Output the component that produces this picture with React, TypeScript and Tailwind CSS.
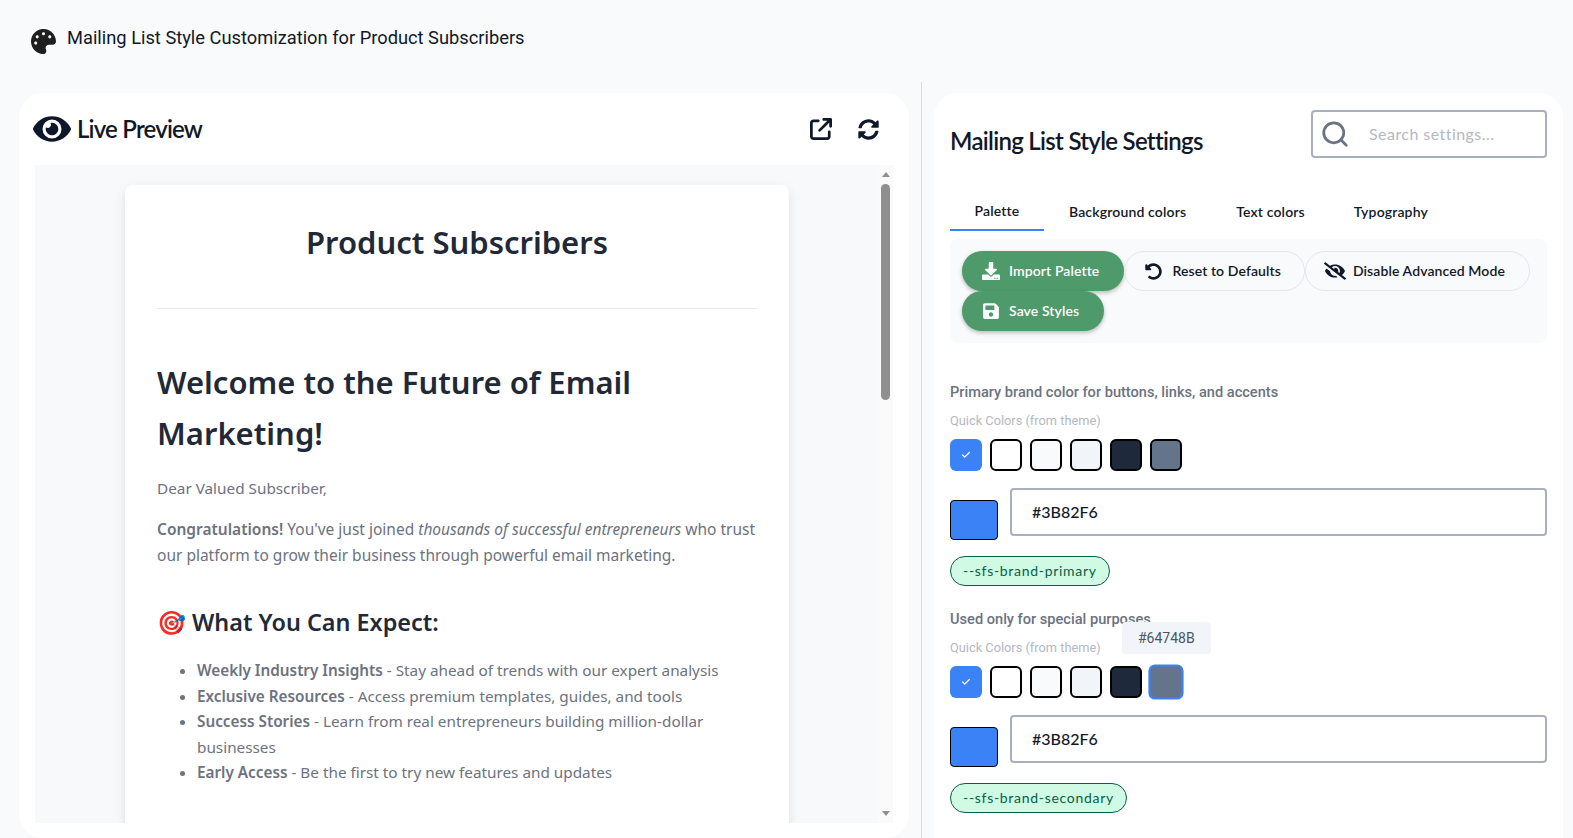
import { Search, Check } from "lucide-react";
import { FaPalette, FaEye, FaSyncAlt, FaSave, FaUndoAlt, FaEyeSlash, FaDownload } from "react-icons/fa";
import { FaArrowUpRightFromSquare } from "react-icons/fa6";

const swatches = ["bg-[#ffffff]", "bg-[#f8fafc]", "bg-[#f1f5f9]", "bg-[#1e293b]", "bg-[#64748b]"];

function Swatches({ hoverLast }: { hoverLast?: boolean }) {
  return (
    <div className="flex gap-2 h-8">
      <div className="w-8 h-8 rounded-md bg-[#3b82f6] flex items-center justify-center">
        <Check size={10} strokeWidth={3} color="#fff" />
      </div>
      {swatches.map((c, i) =>
        hoverLast && i === 4 ? (
          <div key={c} className={"w-8 h-8 rounded-md border-2 border-[#3b82f6] scale-110 " + c} />
        ) : (
          <div key={c} className={"w-8 h-8 rounded-md border-2 border-black " + c} />
        )
      )}
    </div>
  );
}

function ColorSetting({ label, token, hoverLast }: { label: string; token: string; hoverLast?: boolean }) {
  return (
    <div className="relative mb-[23px]">
      <div className="font-['Roboto',sans-serif] text-[14.6px] font-medium text-[#6b7280] leading-5 mb-[10px]">{label}</div>
      <div className="font-['Roboto',sans-serif] text-[12.8px] text-[#b4b8bf] leading-[18px] mb-[9px]">Quick Colors (from theme)</div>
      <Swatches hoverLast={hoverLast} />
      <div className="flex items-start gap-3 mt-[17px]">
        <div className="w-12 h-10 mt-3 rounded bg-[#3b82f6] border border-black" />
        <div className="flex-1 h-12 rounded border-2 border-[#a9b0bd] bg-white flex items-center pl-5 font-['Lato',sans-serif] text-base font-medium text-[#111827]">
          #3B82F6
        </div>
      </div>
      <div className="mt-[16px]">
        <span className="inline-flex items-center h-[30px] px-3 rounded-full bg-[#d1fae5] border border-[#065f46] text-sm text-[#065f46] font-['Lato',sans-serif] tracking-[0.7px]">
          {token}
        </span>
      </div>
      {hoverLast && (
        <div className="absolute left-[172px] top-[13px] px-4 h-8 flex items-center rounded bg-[#f1f5f9] font-['Roboto',sans-serif] text-sm text-[#4b5563]">
          #64748B
        </div>
      )}
    </div>
  );
}

function GreenButton({ icon, children }: { icon: React.ReactNode; children: React.ReactNode }) {
  return (
    <button className="h-10 pl-5 pr-[25px] rounded-full bg-[#4f9a6a] text-white flex items-center gap-[9px] text-sm font-semibold tracking-[0.1px] shadow-[0_2px_4px_rgba(0,0,0,0.25)]">
      {icon}
      {children}
    </button>
  );
}

function OutlineButton({ icon, children, className }: { icon: React.ReactNode; children: React.ReactNode; className?: string }) {
  return (
    <button className={"h-10 rounded-full border border-[#e2e8f0] text-[#111827] flex items-center text-sm font-semibold tracking-[0.1px] " + className}>
      {icon}
      {children}
    </button>
  );
}

function FakeScrollbar() {
  return (
    <div className="w-[15px] shrink-0 bg-[#fafafa] flex flex-col items-center pt-[7px]">
      <div className="w-0 h-0 border-x-[4.5px] border-x-transparent border-b-[5px] border-b-[#8f8f8f]" />
      <div className="w-[9px] h-[216px] rounded-full bg-[#8f8f8f] mt-[7px]" />
      <div className="mt-auto mb-[7px] w-0 h-0 border-x-[4.5px] border-x-transparent border-t-[5px] border-t-[#8f8f8f]" />
    </div>
  );
}

export default function App() {
  return (
    <div className="h-screen overflow-hidden bg-[#f8fafc] flex flex-col">
      <header className="h-[82px] shrink-0 flex items-center pl-[31px] pb-[8px] gap-[11px]">
        <FaPalette size={25} className="text-[#1f1f1f] mt-2" />
        <h1 className="font-['Roboto',sans-serif] text-[18.3px] text-[#111827] mt-[3px] -translate-y-[1px]">
          Mailing List Style Customization for Product Subscribers
        </h1>
      </header>

      <div className="flex-1 min-h-0 flex">
        <div className="w-[922px] shrink-0 border-r border-[#d9dce1] pl-[19px] pr-[12px] pt-[11px]">
          <section className="h-full bg-white rounded-3xl flex flex-col pt-[17px] px-4 pb-[15px]">
            <div className="flex items-center h-[38px] mb-[17px]">
              <FaEye size={38} className="text-[#0f172a] ml-[-2px]" />
              <h2 className="font-['Lato',sans-serif] text-2xl font-semibold tracking-[-0.8px] text-[#111827] ml-[6px]">Live Preview</h2>
              <div className="ml-auto flex items-center gap-[26px] pr-[14px]">
                <FaArrowUpRightFromSquare size={22} className="text-[#0f172a]" />
                <FaSyncAlt size={21} className="text-[#0f172a]" />
              </div>
            </div>

            <div className="flex-1 min-h-0 flex">
              <div className="flex-1 min-w-0 bg-[#f8f9fb] overflow-hidden pt-5 pl-[90px] pr-[89px]">
                <article className="bg-white rounded-lg shadow-[0_4px_12px_rgba(0,0,0,0.1)] px-8 pt-[32px] h-[1760px] font-['Noto_Sans',sans-serif] text-[#6b7280]">
                  <h1 className="text-[31px] font-semibold text-[#1f2937] text-center leading-[50px] pb-[41px] border-b border-[#e5e7eb]">
                    Product Subscribers
                  </h1>
                  <h2 className="text-[31px] font-semibold text-[#1f2937] leading-[51px] mt-[48px] mb-[16px]">
                    Welcome to the Future of Email Marketing!
                  </h2>
                  <p className="text-[15.3px] leading-[26px] mb-[15px]">Dear Valued Subscriber,</p>
                  <p className="text-[15.5px] leading-[26px]">
                    <strong className="font-semibold">Congratulations!</strong> You've just joined{" "}
                    <em>thousands of successful entrepreneurs</em> who trust our platform to grow their business through
                    powerful email marketing.
                  </p>
                  <h3 className="text-[23.4px] font-semibold text-[#1f2937] leading-[36px] mt-[36px] mb-[18px]">
                    🎯 What You Can Expect:
                  </h3>
                  <ul className="list-disc pl-10 text-[15.3px] leading-[25.6px]">
                    <li><strong className="font-semibold">Weekly Industry Insights</strong> - Stay ahead of trends with our expert analysis</li>
                    <li><strong className="font-semibold">Exclusive Resources</strong> - Access premium templates, guides, and tools</li>
                    <li><strong className="font-semibold">Success Stories</strong> - Learn from real entrepreneurs building million-dollar businesses</li>
                    <li><strong className="font-semibold">Early Access</strong> - Be the first to try new features and updates</li>
                  </ul>
                </article>
              </div>
              <FakeScrollbar />
            </div>
          </section>
        </div>

        <div className="flex-1 min-w-0 pl-[12px] pr-[10px] pt-[11px] -mb-6">
          <section className="h-full bg-white rounded-3xl px-4 font-['Lato',sans-serif]">
            <div className="flex items-center justify-between pt-[15px] h-[81px]">
              <h2 className="text-2xl font-semibold tracking-[-0.7px] text-[#111827]">Mailing List Style Settings</h2>
              <div className="w-[236px] h-12 border-2 border-[#a9b0bd] rounded flex items-center pl-[7px] gap-[19px] mt-[-14px]">
                <Search size={30} strokeWidth={2.2} className="text-[#6b7280]" />
                <span className="text-base tracking-[0.45px] text-[#b4b8bf]">Search settings...</span>
              </div>
            </div>

            <div className="flex mt-[19px] text-sm font-semibold tracking-[0.15px] text-[#111827] h-[38px]">
              <div className="w-[94px] flex items-center justify-center border-b-2 border-[#3b82f6]">Palette</div>
              <div className="ml-[25px] flex items-center">Background colors</div>
              <div className="ml-[50px] flex items-center">Text colors</div>
              <div className="ml-[49px] flex items-center">Typography</div>
            </div>

            <div className="mt-[8px] rounded-lg bg-[#f9fafb] p-3 flex flex-wrap">
              <GreenButton icon={<FaDownload size={18} />}>Import Palette</GreenButton>
              <OutlineButton className="pl-5 pr-[23px] gap-[10px]" icon={<FaUndoAlt size={17} />}>Reset to Defaults</OutlineButton>
              <OutlineButton className="pl-[18px] pr-[24px] gap-[7px]" icon={<FaEyeSlash size={22} />}>Disable Advanced Mode</OutlineButton>
              <GreenButton icon={<FaSave size={18} />}>Save Styles</GreenButton>
            </div>

            <div className="mt-[39px]">
              <ColorSetting label="Primary brand color for buttons, links, and accents" token="--sfs-brand-primary" />
              <ColorSetting label="Used only for special purposes" token="--sfs-brand-secondary" hoverLast />
            </div>
          </section>
        </div>
      </div>
    </div>
  );
}
